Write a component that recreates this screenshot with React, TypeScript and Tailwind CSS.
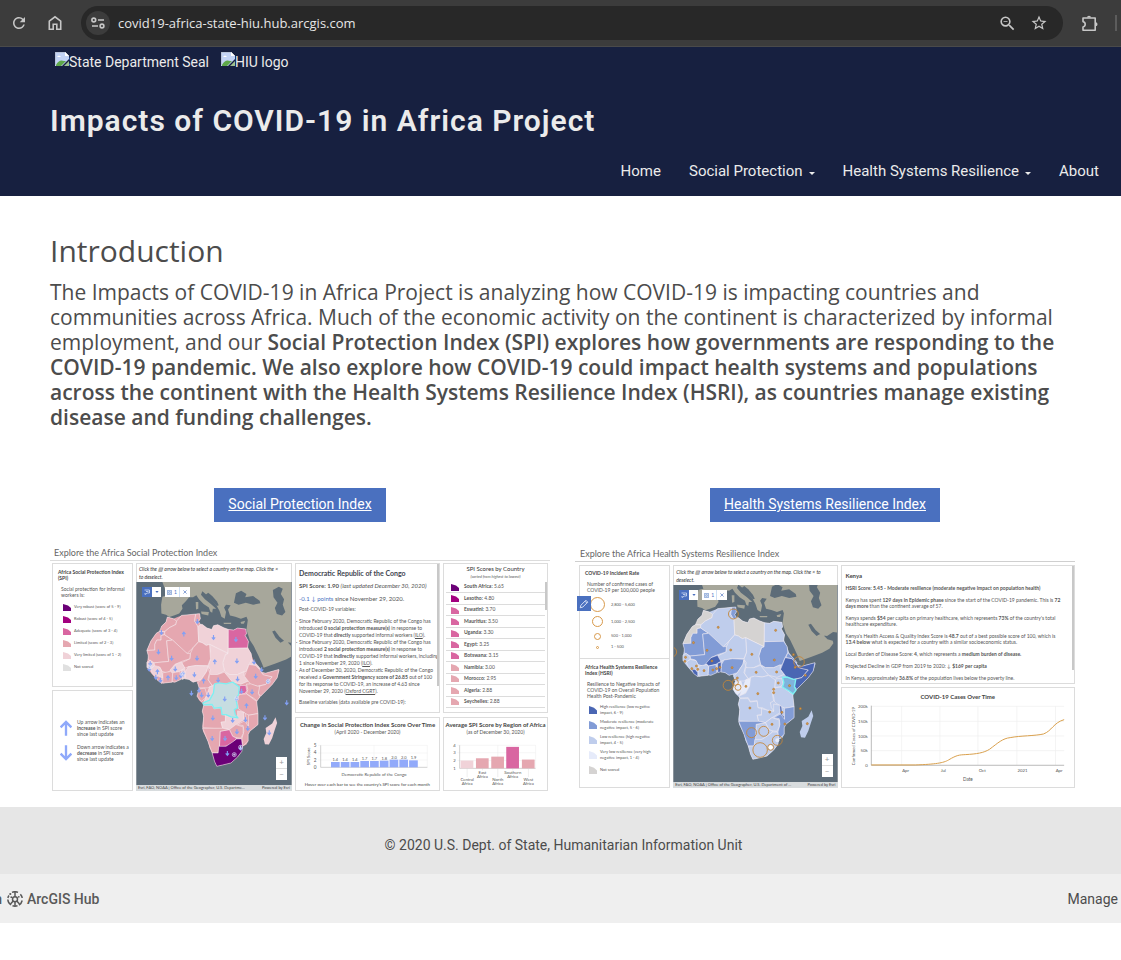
import React from "react";
import { MdRefresh, MdZoomOut, MdStarBorder } from "react-icons/md";

type Point = [number, number];

const OUTLINE =
  "210,103 212,118 207,126 212,135 218,135 232,146 247,150 252,139 265,136 275,141 283,145 297,150 313,152 325,146 350,149 352,163 348,168 358,186 355,200 366,222 372,240 385,257 395,270 398,278 410,281 430,275 450,270 452,273 445,295 430,315 410,335 395,350 385,363 383,372 387,402 387,435 362,455 357,465 357,485 352,495 338,502 338,515 325,532 305,550 280,556 262,560 255,545 248,520 240,505 235,485 220,455 218,440 222,410 218,395 222,375 208,362 202,350 208,335 208,320 200,305 190,308 178,300 165,295 150,300 135,308 120,308 95,312 75,295 62,280 52,268 50,248 55,230 50,212 62,185 80,160 93,153 95,140 108,128 112,113 130,118 155,108 190,105 205,103";

const SHAPES: Record<string, string> = {
  morocco: "112,113 130,118 140,125 138,135 118,145 105,156 88,156 95,140 108,128",
  sahara: "88,156 105,157 104,166 93,168 93,182 80,182 74,195 74,212 50,213 62,185 78,162",
  mauritania: "104,166 128,182 110,184 116,246 72,250 54,240 54,228 50,213 74,212 74,195 80,182 93,182 93,168",
  algeria: "140,125 155,108 198,104 195,125 205,140 207,186 190,205 172,222 160,215 128,182 104,166 104,157 118,145 138,135",
  tunisia: "198,104 210,103 212,118 207,126 212,135 205,142 195,125",
  libya: "212,135 218,135 232,146 247,150 252,139 265,136 283,145 297,150 296,222 240,195 230,198 218,190 207,186 205,142",
  egypt: "297,150 313,152 325,146 350,149 352,163 348,168 358,186 355,206 297,207",
  sudan: "297,207 355,206 366,222 368,240 358,258 352,275 345,278 325,285 300,285 285,275 280,250 288,225 296,222",
  southSudan: "285,278 300,285 325,285 345,276 345,290 357,305 335,314 310,308 295,295",
  chad: "240,195 296,222 288,225 280,250 285,275 265,285 248,290 240,280 242,270 235,260 243,238",
  niger: "207,187 218,190 230,198 240,195 243,238 235,258 200,258 175,262 165,266 155,250 180,238 182,222 190,205",
  mali: "110,184 128,182 172,222 182,222 180,238 155,246 135,255 125,272 110,280 95,275 88,262 72,258 72,250 116,246",
  burkina: "135,255 155,248 165,266 150,275 128,280 120,272",
  nigeria: "175,262 200,258 235,260 232,275 215,300 200,305 190,308 178,300 165,298 167,275",
  benin: "155,272 166,268 165,297 156,300",
  ghana: "128,280 150,276 153,300 135,308 126,306",
  ivory: "98,280 122,276 128,282 126,308 98,311",
  liberia: "76,290 84,286 95,300 95,312 82,302",
  guinea: "60,268 72,260 90,264 96,276 98,296 88,290 74,290 66,282",
  senegal: "50,248 60,242 72,252 72,260 60,268 50,264",
  cameroon: "235,262 240,280 235,300 248,318 235,325 208,325 204,310 215,300 232,275",
  car: "240,285 265,285 285,278 310,308 290,313 265,312 255,314 248,318 237,302",
  gabon: "208,328 226,326 232,345 228,355 215,366 202,350",
  congo: "222,370 228,355 232,345 240,322 258,316 254,338 240,360",
  eritrea: "368,240 385,257 396,270 390,270 380,258 362,255",
  ethiopia: "360,255 380,258 392,270 400,283 430,292 410,315 385,320 365,315 346,290 352,275",
  somalia: "400,279 410,281 450,270 445,295 430,315 395,350 388,342 390,320 410,315 430,292 403,286",
  kenya: "352,314 365,313 385,320 392,320 388,342 393,352 384,364 372,355 352,343 356,330",
  uganda: "332,318 350,318 353,334 346,342 328,344",
  tanzania: "330,345 352,343 383,366 387,402 360,407 345,400 328,388 323,362",
  angola: "222,378 248,378 254,388 275,385 278,405 290,408 288,425 275,428 280,448 220,445 222,410 218,395",
  zambia: "288,408 305,412 325,416 325,394 345,398 345,420 320,435 300,450 280,446 275,428 288,428",
  malawi: "343,398 349,402 352,428 358,432 355,444 348,434 345,420",
  mozambique: "358,407 387,402 387,435 362,455 357,465 357,485 340,500 338,478 344,455 342,438 325,435 346,424 358,440",
  zimbabwe: "300,450 320,435 342,442 342,462 335,476 318,474 310,470",
  botswana: "272,455 300,450 310,470 322,476 310,490 290,500 270,502",
  namibia: "219,446 280,446 300,450 272,455 270,500 266,520 248,520 235,485",
  southAfrica: "248,520 266,520 268,500 290,500 310,487 322,478 337,478 340,502 338,515 325,532 305,550 280,556 262,560 255,545",
  drc: "255,314 268,310 290,313 310,308 330,322 328,345 320,358 325,385 315,390 318,405 326,415 305,412 290,405 278,405 275,384 254,386 248,375 222,376 220,370 240,362 252,340",
};

const MADAGASCAR = "440,413 445,430 438,450 430,475 420,495 408,494 404,478 412,460 410,445 430,432";

const LAND = [
  "97,8 520,8 520,180 505,178 487,190 470,188 452,172 438,153 430,156 440,175 455,190 470,182 488,200 504,204 506,212 494,228 472,240 440,252 404,265 398,250 388,228 374,200 362,182 354,158 352,150 356,122 352,112 335,118 318,112 302,108 296,90 304,78 290,76 284,84 290,98 286,118 276,112 270,94 262,80 246,62 228,44 218,36 214,46 226,60 244,74 260,88 250,88 248,100 242,96 238,84 222,74 208,60 200,48 190,54 178,54 168,66 156,78 158,88 148,102 132,108 118,113 108,106 94,102 93,76 97,52 112,48",
  "214,96 238,98 236,108 216,104",
  "198,68 206,68 206,88 199,90",
  "282,130 306,130 305,134 284,134",
  "334,128 348,124 344,133 336,133",
];

const SEAS = [
  "320,42 336,34 352,44 348,54 372,50 392,64 394,72 372,76 350,70 328,76 314,70",
  "432,32 450,22 462,28 456,44 466,60 462,76 470,98 460,108 444,104 438,86 446,70 434,54",
  "236,40 248,50 262,66 268,78 262,80 244,62 228,46",
];

interface MapProps {
  view: string;
  fills: Record<string, string>;
  base: string;
  selected: string;
  label: string;
  children?: React.ReactNode;
}

function AfricaMap({ view, fills, base, selected, label, children }: MapProps) {
  const order = Object.keys(SHAPES).filter((k) => k !== selected);
  return (
    <svg viewBox={view} preserveAspectRatio="none" role="img" aria-label={label} className="absolute inset-0 h-full w-full">
      <rect x="0" y="0" width="540" height="660" fill="#5d6c78" />
      {LAND.map((p) => (
        <polygon key={p} points={p} fill="#a7a79b" />
      ))}
      {SEAS.map((p) => (
        <polygon key={p} points={p} fill="#5d6c78" />
      ))}
      <polygon points={OUTLINE} fill={base} />
      <g stroke="#f6eef2" strokeWidth="1.6" strokeLinejoin="round">
        {order.map((k) => (
          <polygon key={k} points={SHAPES[k]} fill={fills[k] ?? base} />
        ))}
        <polygon points={MADAGASCAR} fill={fills.madagascar ?? base} stroke="none" />
      </g>
      <polygon points={SHAPES[selected]} fill={fills[selected]} stroke="#7df0f2" strokeWidth="4" strokeLinejoin="round" />
      {children}
    </svg>
  );
}

const PINK = "#e5a7b0";
const PALE = "#f0d2d8";
const ROSE = "#d966a1";

const SPI_FILLS: Record<string, string> = {
  libya: PALE, chad: PALE, sudan: PALE, southSudan: PALE, nigeria: PALE, zambia: PALE, madagascar: PALE,
  congo: PALE, guinea: PALE, senegal: PALE, burkina: PALE, eritrea: PALE, benin: PALE,
  egypt: ROSE, uganda: ROSE, botswana: ROSE, southAfrica: "#6b0077", drc: "#c6dde1",
};

const DOWN: Point[] = [
  [203, 126], [252, 174], [320, 180], [94, 159], [85, 217], [125, 236], [202, 236], [323, 244], [375, 247], [398, 270],
  [60, 252], [57, 268], [136, 268], [194, 285], [139, 294], [153, 288], [77, 293], [91, 302], [185, 341], [208, 332],
  [216, 346], [236, 346], [266, 301], [325, 298], [380, 290], [417, 305], [337, 335], [369, 337], [286, 358], [250, 415],
  [310, 422], [349, 420], [356, 446], [408, 414], [421, 459], [474, 369], [248, 476], [287, 476], [323, 456], [294, 521],
  [322, 357], [334, 505],
];
const UP: Point[] = [[162, 164], [256, 247], [82, 277], [114, 295], [222, 305], [352, 379], [160, 284]];
const RINGS: Point[] = [[60, 262], [158, 284], [322, 357], [418, 306], [315, 525], [334, 503]];

function SpiMap() {
  return (
    <AfricaMap view="20 8 467 608" fills={SPI_FILLS} base={PINK} selected="drc" label="Map of Social Protection Index scores">
      <g stroke="#82a0f5" strokeWidth="3.4" fill="none">
        {DOWN.map(([x, y]) => (
          <path key={`${x}-${y}`} d={`M${x} ${y - 7}v13M${x - 5} ${y}l5 6l5-6`} />
        ))}
        {UP.map(([x, y]) => (
          <path key={`${x}-${y}`} d={`M${x} ${y + 7}v-13M${x - 5} ${y}l5-6l5 6`} />
        ))}
      </g>
      {RINGS.map(([x, y]) => (
        <g key={`${x}-${y}`} fill="none" stroke="#dbe3fb" strokeWidth="2">
          <circle cx={x} cy={y} r="6" />
          <path d={`M${x - 4} ${y}h8M${x} ${y - 4}v8`} />
        </g>
      ))}
    </AfricaMap>
  );
}

const MID = "#829cd6";
const LOW = "#bfcdec";
const HIGH = "#4a66b3";
const GREY = "#d5d3d2";

const HSRI_FILLS: Record<string, string> = {
  morocco: GREY, sahara: GREY, libya: GREY, mauritania: MID, mali: MID, tunisia: MID, nigeria: MID, sudan: MID,
  namibia: MID, mozambique: MID, senegal: LOW, ghana: MID, benin: HIGH, burkina: HIGH, ethiopia: HIGH, somalia: HIGH,
  malawi: HIGH, liberia: HIGH, guinea: LOW, eritrea: MID, gabon: "#e6ebfa", congo: "#e6ebfa", kenya: "#7fb3dc",
};

const CASES: [number, number, number][] = [
  [203, 124, 15], [187, 338, 15], [209, 329, 9], [217, 344, 9], [402, 268, 16], [258, 480, 15], [295, 476, 15],
  [284, 532, 22], [316, 524, 9], [336, 503, 15], [16, 238, 15],
];
const DOTS: Point[] = [
  [157, 164], [331, 173], [82, 210], [123, 233], [195, 232], [259, 245], [327, 262], [385, 246], [58, 254], [56, 266],
  [77, 288], [91, 280], [95, 290], [114, 294], [138, 265], [141, 292], [152, 288], [162, 284], [199, 285], [215, 316],
  [272, 299], [334, 298], [390, 284], [421, 308], [241, 341], [277, 363], [339, 331], [373, 339], [325, 350], [325, 360],
  [253, 406], [313, 418], [350, 419], [359, 454], [320, 455], [406, 408], [427, 453],
];

function HsriMap() {
  return (
    <AfricaMap view="23 37 492 591" fills={HSRI_FILLS} base={LOW} selected="kenya" label="Map of Health Systems Resilience Index scores">
      <circle cx="316" cy="524" r="7" fill="#fff" />
      <circle cx="336" cy="503" r="6" fill="#e6ebfa" />
      {CASES.map(([x, y, r]) => (
        <circle key={`${x}-${y}`} cx={x} cy={y} r={r} fill="none" stroke="#c48638" strokeWidth="2.6" />
      ))}
      {DOTS.map(([x, y]) => (
        <circle key={`${x}-${y}`} cx={x} cy={y} r="3.2" fill="#d8994a" stroke="#a86f28" strokeWidth="1.5" />
      ))}
    </AfricaMap>
  );
}

function MapFrame({ children, credit }: { children: React.ReactNode; credit: string }) {
  return (
    <>
      <div className="relative min-h-0 flex-1 border-x border-[#8a939b]">
        {children}
        <div className="absolute left-[5px] top-[5px] flex gap-[4px]">
          <div className="flex h-[10px]">
            <span className="flex w-[10px] items-center justify-center bg-[#4a70bf]">
              <svg viewBox="0 0 12 12" className="h-[6px] w-[6px]" fill="none" stroke="#dbe4f7" strokeWidth="1.5">
                <path d="M1 2h10v6H7L2 11V8M4 5h5" />
              </svg>
            </span>
            <span className="flex w-[9px] items-center justify-center bg-white">
              <svg viewBox="0 0 8 5" className="h-[2px] w-[4px]" fill="#4a70bf"><path d="M0 0h8L4 5z" /></svg>
            </span>
          </div>
          <div className="flex h-[10px] bg-white text-[5px] leading-[10px] text-[#4a70bf]">
            <span className="flex w-[15px] items-center justify-center gap-[2px] border-r border-[#cfe0f5]">
              <svg viewBox="0 0 12 12" className="h-[5px] w-[5px]" fill="none" stroke="#5b83c9" strokeWidth="1.5">
                <path d="M1 1h10v10H1zM4 4h4v4H4z" />
              </svg>
              1
            </span>
            <span className="flex w-[10px] items-center justify-center">
              <svg viewBox="0 0 10 10" className="h-[4px] w-[4px]" stroke="#4a70bf" strokeWidth="1.6"><path d="M1 1l8 8M9 1l-8 8" /></svg>
            </span>
          </div>
        </div>
        <div className="absolute bottom-[5px] right-[4px] flex w-[11px] flex-col bg-white text-center text-[8px] leading-[11px] text-[#9a9a9a]">
          <span className="border-b border-[#dddddd]">+</span>
          <span>−</span>
        </div>
      </div>
      <div className="flex justify-between whitespace-nowrap bg-[#d8dcde] px-[2px] text-[4px] leading-[6px] text-[#444444]">
        <span>{credit}</span>
        <span>Powered by Esri</span>
      </div>
    </>
  );
}

function Swatch({ color, className }: { color: string; className: string }) {
  return (
    <svg viewBox="0 0 8 7" preserveAspectRatio="none" className={className}>
      <path d="M0 0L5 1.5L8 4V7H0Z" fill={color} />
    </svg>
  );
}

function Lines({ items }: { items: React.ReactNode[] }) {
  return (
    <>
      {items.map((t, i) => (
        <span key={i} className="block">{t}</span>
      ))}
    </>
  );
}

const SPI_LEGEND: [string, string][] = [
  ["#6b0077", "Very robust (score of 5 - 9)"],
  ["#a3007f", "Robust (score of 4 - 5)"],
  [ROSE, "Adequate (score of 3 - 4)"],
  [PINK, "Limited (score of 2 - 3)"],
  [PALE, "Very limited (score of 1 - 2)"],
  ["#e0e0e0", "Not scored"],
];

const SPI_SCORES: [string, string, string][] = [
  ["#6b0077", "South Africa", "5.65"],
  ["#a3007f", "Lesotho", "4.80"],
  [ROSE, "Eswatini", "3.70"],
  [ROSE, "Mauritius", "3.50"],
  [ROSE, "Uganda", "3.30"],
  [ROSE, "Egypt", "3.25"],
  [ROSE, "Botswana", "3.15"],
  [PINK, "Namibia", "3.00"],
  [PINK, "Morocco", "2.95"],
  [PINK, "Algeria", "2.88"],
  [PINK, "Seychelles", "2.88"],
];

const panel = "overflow-hidden border border-[#dcdcdc] bg-white";
const bullet = "relative before:absolute before:-left-[3px] before:content-['·']";

function BigArrow({ up }: { up?: boolean }) {
  return (
    <svg viewBox="0 0 36 46" className="h-[16px] w-[12px] shrink-0" fill="none" stroke="#8fa9fa" strokeWidth="7">
      {up ? <path d="M18 46V6M2 21L18 5L34 21" /> : <path d="M18 0V40M2 25L18 41L34 25" />}
    </svg>
  );
}

const MONTHLY: [string, number][] = [
  ["1.4", 667], ["1.4", 667], ["1.4", 667], ["1.7", 664], ["1.7", 664], ["1.8", 663], ["2.0", 660], ["2.0", 660], ["1.9", 662],
];

function MonthlyChart() {
  return (
    <svg viewBox="18 604 429 146" role="img" aria-label="Social Protection Index score by month" className="block w-full font-[Lato] text-[14px]" fill="#555">
      <g stroke="#ececec" strokeWidth="1.5">
        <path d="M84 617H412M84 640H412M84 661H412M252 617V683M412 617V683" />
      </g>
      <path d="M92 617V683H412" fill="none" stroke="#bbb" strokeWidth="2" />
      {([["5", 622], ["4", 643], ["2", 666], ["0", 688]] as [string, number][]).map(([t, y]) => (
        <text key={t} x="71" y={y}>{t}</text>
      ))}
      <text transform="translate(61 677) rotate(-90)" fontSize="13">SPI Score</text>
      {MONTHLY.map(([t, y], i) => (
        <g key={i}>
          <rect x={123 + i * 29.3} y={y} width="26" height={683 - y} fill="#92aafa" />
          <text x={136 + i * 29.3} y={y - 3} textAnchor="middle" fontSize="12">{t}</text>
        </g>
      ))}
      <text x="252" y="708" textAnchor="middle" fontSize="13">Democratic Republic of the Congo</text>
      <text x="232" y="739" textAnchor="middle" fontSize="13" fill="#444">Hover over each bar to see the country's SPI score for each month</text>
    </svg>
  );
}

const REGIONS: [string, number, number, string, number][] = [
  ["Central", 508, 664, PALE, 726],
  ["East", 555, 657, PINK, 705],
  ["North", 602, 652, PINK, 726],
  ["Southern", 648, 622, ROSE, 705],
  ["West", 696, 661, PINK, 726],
];

function RegionChart() {
  return (
    <svg viewBox="457 604 316 146" role="img" aria-label="Average score by region" className="block w-full font-[Lato] text-[13px]" fill="#555">
      <path d="M498 617H738M498 640H738M498 664H738M622 617V688M738 617V688" stroke="#ececec" strokeWidth="1.5" />
      <path d="M505 617V688H738" fill="none" stroke="#bbb" strokeWidth="2" />
      {([["4", 622], ["3", 645], ["2", 669], ["1", 693]] as [string, number][]).map(([t, y]) => (
        <text key={t} x="485" y={y}>{t}</text>
      ))}
      {REGIONS.map(([t, x, y, c, ly]) => (
        <g key={t}>
          <rect x={x} y={y} width="39" height={688 - y} fill={c} />
          <path d={`M${x + 20} 688V${ly - 11}`} stroke="#ccc" />
          <text x={x + 20} y={ly} textAnchor="middle">{t}</text>
          <text x={x + 20} y={ly + 13} textAnchor="middle">Africa</text>
        </g>
      ))}
    </svg>
  );
}

function SpiDashboard() {
  return (
    <figure className="font-[Lato,'Liberation_Sans',sans-serif] text-[#555555]">
      <figcaption className="border-b border-[#dcdcdc] pl-1 text-[9px] leading-[15px] text-[#666666]">
        Explore the Africa Social Protection Index
      </figcaption>
      <div className="mt-[2px] grid h-[228px] grid-cols-[81fr_156fr_145fr_105fr] gap-[3px] pl-[2px] pr-[2px]">
        <div className="grid min-w-0 grid-rows-[124fr_101fr] gap-[3px]">
          <div className={`${panel} whitespace-nowrap pl-[5px] pt-[5px] text-[5px] leading-[6px]`}>
            <div className="font-bold text-[#444444]">
              <Lines items={["Africa Social Protection Index", "(SPI)"]} />
            </div>
            <div className="mt-[5px] pl-[3px]">
              <Lines items={["Social protection for informal", "workers is:"]} />
            </div>
            <ul className="pl-[5px] pt-[3px]">
              {SPI_LEGEND.map(([c, t]) => (
                <li key={t} className="flex h-[12px] items-center gap-[3px] text-[4px]">
                  <Swatch color={c} className="h-[7px] w-[8px]" />
                  {t}
                </li>
              ))}
            </ul>
          </div>
          <div className={`${panel} flex flex-col justify-center gap-[7px] whitespace-nowrap pl-[7px] text-[5px] leading-[6px]`}>
            <div className="flex items-center gap-[5px]">
              <BigArrow up />
              <div><Lines items={["Up arrow indicates an", <><b>increase</b> in SPI score</>, "since last update"]} /></div>
            </div>
            <div className="flex items-center gap-[5px]">
              <BigArrow />
              <div><Lines items={["Down arrow indicates a", <><b>decrease</b> in SPI score</>, "since last update"]} /></div>
            </div>
          </div>
        </div>

        <div className="flex min-w-0 flex-col overflow-hidden border-t border-[#dcdcdc]">
          <p className="h-[18px] whitespace-nowrap border-x border-[#dcdcdc] px-[2px] pt-px text-[5px] italic leading-[8px] text-[#333333]">
            <Lines items={["Click the ▧ arrow below to select a country on the map. Click the ×", "to deselect."]} />
          </p>
          <MapFrame credit="Esri, FAO, NOAA | Office of the Geographer, U.S. Departme...">
            <SpiMap />
          </MapFrame>
        </div>

        <div className="grid min-w-0 grid-rows-[150fr_74fr] gap-[4px]">
          <div className={`${panel} relative whitespace-nowrap pl-[3px] pt-[5px] text-[5px]`}>
            <h3 className="text-[7px] font-bold leading-[8px] text-[#3f4650]">Democratic Republic of the Congo</h3>
            <p className="mt-[5px] text-[6px] leading-[8px]"><b>SPI Score: 1.90</b> <i>(last updated December 30, 2020)</i></p>
            <p className="mt-[5px] text-[6px] leading-[7px]"><span className="text-[#4a70bf]">-0.1 ↓ points</span> since November 29, 2020.</p>
            <p className="mt-[4px] leading-[7px]">Post-COVID-19 variables:</p>
            <ul className="mt-[5px] leading-[7px]">
              <li className={bullet}><Lines items={["Since February 2020, Democratic Republic of the Congo has", <>introduced <b>0 social protection measure(s)</b> in response to</>, <>COVID-19 that <b>directly</b> supported informal workers (<u>ILO</u>).</>]} /></li>
              <li className={bullet}><Lines items={["Since February 2020, Democratic Republic of the Congo has", <>introduced <b>2 social protection measure(s)</b> in response to</>, <>COVID-19 that <b>indirectly</b> supported informal workers, including</>, <>1 since November 29, 2020 (<u>ILO</u>).</>]} /></li>
              <li className={bullet}><Lines items={["As of December 30, 2020, Democratic Republic of the Congo", <>received a <b>Government Stringency score of 26.85</b> out of 100</>, "for its response to COVID-19, an increase of 4.63 since", <>November 29, 2020 (<u>Oxford CGRT</u>).</>]} /></li>
            </ul>
            <p className="mt-[4px] leading-[7px]">Baseline variables (data available pre COVID-19):</p>
            <span className="absolute right-0 top-0 h-[122px] w-[2px] bg-[#c8c8c8]" />
          </div>
          <div className={`${panel} pt-[3px] text-center`}>
            <h3 className="whitespace-nowrap text-[6px] font-bold leading-[8px] text-[#444444]">Change in Social Protection Index Score Over Time</h3>
            <p className="text-[5px] leading-[7px]">(April 2020 - December 2020)</p>
            <div className="mt-[5px]"><MonthlyChart /></div>
          </div>
        </div>

        <div className="grid min-w-0 grid-rows-[150fr_74fr] gap-[4px]">
          <div className={`${panel} relative flex flex-col`}>
            <h3 className="pt-px text-center text-[6px] leading-[8px] text-[#333333]">SPI Scores by Country</h3>
            <p className="text-center text-[4px] italic leading-[7px]">(sorted from highest to lowest)</p>
            <ul className="flex flex-1 flex-col px-[2px] pb-[4px] pt-[2px] text-[5px]">
              {SPI_SCORES.map(([c, name, score]) => (
                <li key={name} className="flex flex-1 items-center gap-[5px] border-b border-[#dcdcdc] pl-[5px]">
                  <Swatch color={c} className="h-[7px] w-[8px]" />
                  <span><b>{name}:</b> {score}</span>
                </li>
              ))}
            </ul>
            <span className="absolute right-0 top-[18px] h-[28px] w-[2px] bg-[#c8c8c8]" />
          </div>
          <div className={`${panel} pt-[3px] text-center`}>
            <h3 className="whitespace-nowrap text-[6px] font-bold leading-[8px] text-[#444444]">Average SPI Score by Region of Africa</h3>
            <p className="text-[5px] leading-[7px]">(as of December 30, 2020)</p>
            <div className="mt-[5px]"><RegionChart /></div>
          </div>
        </div>
      </div>
    </figure>
  );
}

const RATES: [string, string, string][] = [
  ["h-[15px] w-[15px] border", "2,800 - 5,600", "h-[17px]"],
  ["h-[11px] w-[11px] border", "1,000 - 2,500", "h-[17px]"],
  ["h-[7px] w-[7px] border", "500 - 1,000", "h-[12px]"],
  ["h-[3px] w-[3px] border", "1 - 500", "h-[10px]"],
];

const RESILIENCE: [string, string[]][] = [
  [HIGH, ["High resilience (low negative", "impact, 6 - 9)"]],
  [MID, ["Moderate resilience (moderate", "negative impact, 5 - 6)"]],
  [LOW, ["Low resilience (high negative", "impact, 4 - 5)"]],
  ["#e6ebfa", ["Very low resilience (very high", "negative impact, 1 - 4)"]],
  [GREY, ["Not scored"]],
];

function CasesChart() {
  return (
    <svg viewBox="20 490 698 252" role="img" aria-label="COVID-19 cases over time" className="block w-full font-[Lato] text-[13px]" fill="#555">
      <path d="M108 506H687M108 551H687M108 595H687M108 639H687M199 506V682M314 506V682M428 506V682M545 506V682M661 506V682" stroke="#eeeeee" strokeWidth="2" />
      <path d="M108 504V683H687" fill="none" stroke="#999" strokeWidth="2" />
      {([["200k", 511], ["150k", 556], ["100k", 600], ["50k", 643], ["0", 687]] as [string, number][]).map(([t, y]) => (
        <text key={t} x="97" y={y} textAnchor="end">{t}</text>
      ))}
      {([["Apr", 211], ["Jul", 324], ["Oct", 441], ["2021", 562], ["Apr", 672]] as [string, number][]).map(([t, x]) => (
        <text key={x} x={x} y="703" textAnchor="middle">{t}</text>
      ))}
      <text x="398" y="730" textAnchor="middle" fontSize="14">Date</text>
      <text transform="translate(59 683) rotate(-90)" fontSize="13">Confirmed Cases of COVID-19</text>
      <path d="M108 682H240C300 680 325 676 340 667C365 652 372 652 390 651C425 649 445 646 463 635C488 616 503 602 525 600C555 594 600 595 625 589C650 580 655 555 687 546" fill="none" stroke="#d9a04c" strokeWidth="3" />
    </svg>
  );
}

function HsriDashboard() {
  return (
    <figure className="relative mt-[2px] font-[Lato,'Liberation_Sans',sans-serif] text-[#555555]">
      <figcaption className="border-b border-[#cfcfcf] pl-[5px] text-[9px] leading-[15px] text-[#666666]">
        Explore the Africa Health Systems Resilience Index
      </figcaption>
      <div className="mt-[3px] grid h-[223px] grid-cols-[91fr_164fr_234fr] gap-[3px] pl-[4px]">
        <div className={`${panel} min-w-0 whitespace-nowrap text-[5px] leading-[6px]`}>
          <div className="h-[93px] border-b border-[#dcdcdc] pl-[5px] pt-[4px]">
            <h3 className="font-bold leading-[7px] text-[#444444]">COVID-19 Incident Rate</h3>
            <div className="mt-[4px] pl-[2px]"><Lines items={["Number of confirmed cases of", "COVID-19 per 100,000 people"]} /></div>
            <ul className="mt-[3px]">
              {RATES.map(([size, text, row]) => (
                <li key={text} className={`flex items-center gap-[2px] ${row}`}>
                  <span className="flex w-[24px] justify-center"><span className={`rounded-full border-[#d8994a] ${size}`} /></span>
                  <span className="text-[4px]">{text}</span>
                </li>
              ))}
            </ul>
          </div>
          <div className="pl-[5px] pt-[5px]">
            <h3 className="font-bold text-[#444444]"><Lines items={["Africa Health Systems Resilience", "Index (HSRI)"]} /></h3>
            <div className="mt-[5px] pl-[2px]"><Lines items={["Resilience to Negative Impacts of", "COVID-19 on Overall Population", "Health Post-Pandemic"]} /></div>
            <ul className="mt-[3px] pl-[4px]">
              {RESILIENCE.map(([c, t]) => (
                <li key={t[0]} className="flex h-[15px] items-center gap-[3px] text-[4px]">
                  <Swatch color={c} className="h-[8px] w-[8px]" />
                  <span><Lines items={t} /></span>
                </li>
              ))}
            </ul>
          </div>
        </div>

        <div className="flex min-w-0 flex-col overflow-hidden border-t border-[#dcdcdc]">
          <p className="h-[19px] whitespace-nowrap border-x border-[#dcdcdc] px-[2px] pt-[2px] text-[5px] italic leading-[8px] text-[#333333]">
            <Lines items={["Click the ▧ arrow below to select a country on the map. Click the × to", "deselect."]} />
          </p>
          <MapFrame credit="Esri, FAO, NOAA | Office of the Geographer, U.S. Department of ...">
            <HsriMap />
          </MapFrame>
        </div>

        <div className="grid min-w-0 grid-rows-[119fr_101fr] gap-[3px]">
          <div className={`${panel} relative flex flex-col gap-[6px] whitespace-nowrap pl-[4px] pt-[6px] text-[5px] leading-[6px]`}>
            <h3 className="text-[6px] font-bold leading-[7px] text-[#444444]">Kenya</h3>
            <p className="font-bold">HSRI Score: 5.45 - Moderate resilience (moderate negative impact on population health)</p>
            <p><Lines items={[<>Kenya has spent <b>129 days in Epidemic phase</b> since the start of the COVID-19 pandemic. This is <b>72</b></>, <><b>days more</b> than the continent average of 57.</>]} /></p>
            <p><Lines items={[<>Kenya spends <b>$54</b> per capita on primary healthcare, which represents <b>73%</b> of the country's total</>, "healthcare expenditure."]} /></p>
            <p><Lines items={[<>Kenya's Health Access &amp; Quality Index Score is <b>48.7</b> out of a best possible score of 100, which is</>, <><b>13.4 below</b> what is expected for a country with a similar socioeconomic status.</>]} /></p>
            <p>Local Burden of Disease Score: <b>4</b>, which represents a <b>medium burden of disease.</b></p>
            <p>Projected Decline in GDP from 2019 to 2020: ↓ <b>$169 per capita</b></p>
            <p>In Kenya, approximately <b>36.8%</b> of the population lives below the poverty line.</p>
            <span className="absolute right-0 top-0 h-[104px] w-[2px] bg-[#c8c8c8]" />
          </div>
          <div className={`${panel} pt-[4px]`}>
            <h3 className="text-center text-[6px] font-bold leading-[9px] text-[#444444]">COVID-19 Cases Over Time</h3>
            <CasesChart />
          </div>
        </div>
      </div>
      <button type="button" aria-label="Edit" className="absolute left-[2px] top-[50px] flex h-[15px] w-[14px] items-center justify-center bg-[#4a70bf]">
        <svg viewBox="0 0 16 16" className="h-[10px] w-[10px]" fill="none" stroke="#e8eefb" strokeWidth="1.4">
          <path d="M2 14l1-4L11 2l3 3L6 13zM9.500 3.500l3 3" />
        </svg>
      </button>
    </figure>
  );
}

function BrokenImage({ alt }: { alt: string }) {
  return (
    <span className="flex items-start">
      <svg viewBox="0 0 14 14" className="h-[14px] w-[14px] shrink-0" aria-hidden="true">
        <path d="M0 0H10L14 4V7L7 14H0Z" fill="#c3d3f5" />
        <path d="M0 13V0H10L14 4" fill="none" stroke="#aeb4bd" />
        <path d="M10 0V4H14Z" fill="#fff" />
        <path d="M2 5q2-3 4 0z" fill="#fff" />
        <path d="M1 13Q4 7 9 9L11 9L6 14H1Z" fill="#5fa84a" />
        <path d="M9 14L14 9V14Z" fill="#9fc08f" />
      </svg>
      {alt}
    </span>
  );
}

function Caret() {
  return (
    <svg viewBox="0 0 6 3" className="mt-[3px] h-[3px] w-[6px]" fill="currentColor"><path d="M0 0h6L3 3z" /></svg>
  );
}

function BrowserBar() {
  return (
    <div className="flex h-[47px] items-center border-b border-[#4a4a4a] bg-[#3c3c3c] text-[#c7c7c7]">
      <button type="button" aria-label="Reload" className="ml-[11px] flex w-4 justify-center"><MdRefresh size={18} className="shrink-0" /></button>
      <button type="button" aria-label="Home" className="ml-[20px] flex w-4 justify-center">
        <svg viewBox="0 0 16 16" className="h-4 w-4" fill="none" stroke="currentColor" strokeWidth="1.6">
          <path d="M2.300 14.200V6.200L8 1.800l5.700 4.400v8H9.800V9.300H6.200v4.900z" />
        </svg>
      </button>
      <div className="ml-[18px] mr-[17px] flex h-[34px] min-w-0 flex-1 items-center rounded-full bg-[#282828] pl-[5px] pr-[15px]">
        <button type="button" aria-label="View site information" className="flex h-6 w-6 items-center justify-center rounded-full bg-[#3c3c3c]">
          <svg viewBox="0 0 14 12" className="h-3 w-[14px]" fill="none" stroke="currentColor" strokeWidth="1.600">
            <circle cx="2.800" cy="3" r="1.900" /><path d="M7 3h6M1 9h6" /><circle cx="11" cy="9" r="1.900" />
          </svg>
        </button>
        <input aria-label="Address" defaultValue="covid19-africa-state-hiu.hub.arcgis.com" className="ml-[8px] min-w-0 flex-1 bg-transparent font-['Open_Sans','Noto_Sans',sans-serif] text-[13px] leading-[20px] text-[#e6e6e6] outline-none" />
        <button type="button" aria-label="Zoom"><MdZoomOut size={19} /></button>
        <button type="button" aria-label="Bookmark" className="ml-[13px]"><MdStarBorder size={18} /></button>
      </div>
      <button type="button" aria-label="Extensions" className="mr-px flex w-[19px] justify-center">
        <svg viewBox="0 0 19 19" className="h-[19px] w-[19px]" fill="none" stroke="currentColor" strokeWidth="1.600" strokeLinejoin="round">
          <path d="M3 4H15.200V16.200H3V13Q5.200 12.600 5.200 10.300Q5.200 8 3 7.600Z" />
          <path d="M7 3.500Q7 1.800 9 1.800Q11 1.800 11 3.500ZM15.700 8.200Q17.500 8.200 17.500 10.200Q17.500 12.200 15.700 12.200Z" fill="currentColor" stroke="none" />
        </svg>
      </button>
      <span className="ml-[15px] mr-[4px] h-4 w-[2px] bg-[#5c5c5c]" />
    </div>
  );
}

export default function App() {
  return (
    <div className="bg-white font-[Roboto,'Liberation_Sans',sans-serif]">
      <BrowserBar />
      <header className="bg-[#172040] pb-[14px] pl-[50px] pr-[22px] pt-[5px] text-[#ebebeb]">
        <div className="flex gap-[12px] pl-[5px] text-[14px] leading-[20px]">
          <BrokenImage alt="State Department Seal" />
          <BrokenImage alt="HIU logo" />
        </div>
        <h1 className="mt-[29px] text-[30px] font-semibold leading-[40px] tracking-[1px]">Impacts of COVID-19 in Africa Project</h1>
        <nav className="mt-[20px] flex justify-end gap-[28px] text-[15px] leading-[21px]">
          <a href="#home">Home</a>
          <a href="#social" className="flex items-center gap-[6px]">Social Protection <Caret /></a>
          <a href="#health" className="flex items-center gap-[6px]">Health Systems Resilience <Caret /></a>
          <a href="#about">About</a>
        </nav>
      </header>

      <main className="pb-[16px] pl-[50px] pr-[46px] pt-[34px]">
        <section className="font-['Open_Sans','Noto_Sans',sans-serif] text-[#4c4c4c]">
          <h2 className="text-[30px] leading-[42px]">Introduction</h2>
          <p className="mt-[8px] whitespace-nowrap text-[21px] leading-[25px]">
            The Impacts of COVID-19 in Africa Project is analyzing how COVID-19 is impacting countries and<br />
            communities across Africa. Much of the economic activity on the continent is characterized by informal<br />
            employment, and our <b className="font-semibold">Social Protection Index (SPI) explores how governments are responding to the<br />
            COVID-19 pandemic. We also explore how COVID-19 could impact health systems and populations<br />
            across the continent with the Health Systems Resilience Index (HSRI), as countries manage existing<br />
            disease and funding challenges.</b>
          </p>
        </section>

        <div className="mt-[58px] grid grid-cols-2 gap-[25px]">
          <div className="min-w-0">
            <div className="flex justify-center">
              <a href="#spi" className="bg-[#4a70bf] px-[14px] pb-px text-[14px] leading-[33px] text-white underline">Social Protection Index</a>
            </div>
            <div className="mt-[23px]"><SpiDashboard /></div>
          </div>
          <div className="min-w-0">
            <div className="flex justify-center">
              <a href="#hsri" className="bg-[#4a70bf] px-[14px] pb-px text-[14px] leading-[33px] text-white underline">Health Systems Resilience Index</a>
            </div>
            <div className="mt-[24px]"><HsriDashboard /></div>
          </div>
        </div>
      </main>

      <footer className="text-[#4c4c4c]">
        <div className="bg-[#e6e6e6] pb-[18px] pl-[6px] pt-[28px] text-center text-[14px] leading-[21px]">
          © 2020 U.S. Dept. of State, Humanitarian Information Unit
        </div>
        <div className="flex h-[49px] items-center justify-between bg-[#efefef] pr-[3px] text-[14px] leading-[20px]">
          <a href="#hub" className="flex items-center font-medium text-[#595959]">
            <span className="flex w-[2px] justify-end overflow-hidden">n</span>
            <svg viewBox="0 0 16 16" className="ml-[5px] mr-[4px] h-4 w-4" fill="none" stroke="#595959" strokeWidth="1.500">
              <path d="M5 1.400Q8 0 11 1.400M13.400 3.200Q15 5 15.200 7M15.200 9.500Q14.500 12.500 12 14M10.500 14.800Q8 15.500 5.500 14.800M4 14Q1 12 .8 8.500M.9 7Q1.200 5.500 2 4.500" />
              <circle cx="8" cy="8.200" r="2.500" />
              <path d="M8 5.700V1M6.200 10L3.500 13M9.800 10L12.500 13M8 10.700V15" />
              <circle cx="3.300" cy="3" r="1.100" fill="#595959" stroke="none" />
              <circle cx="4.300" cy="6.200" r=".9" fill="#595959" stroke="none" />
              <circle cx="11.800" cy="5.800" r=".9" fill="#595959" stroke="none" />
            </svg>
            ArcGIS Hub
          </a>
          <a href="#manage">Manage</a>
        </div>
      </footer>
    </div>
  );
}
